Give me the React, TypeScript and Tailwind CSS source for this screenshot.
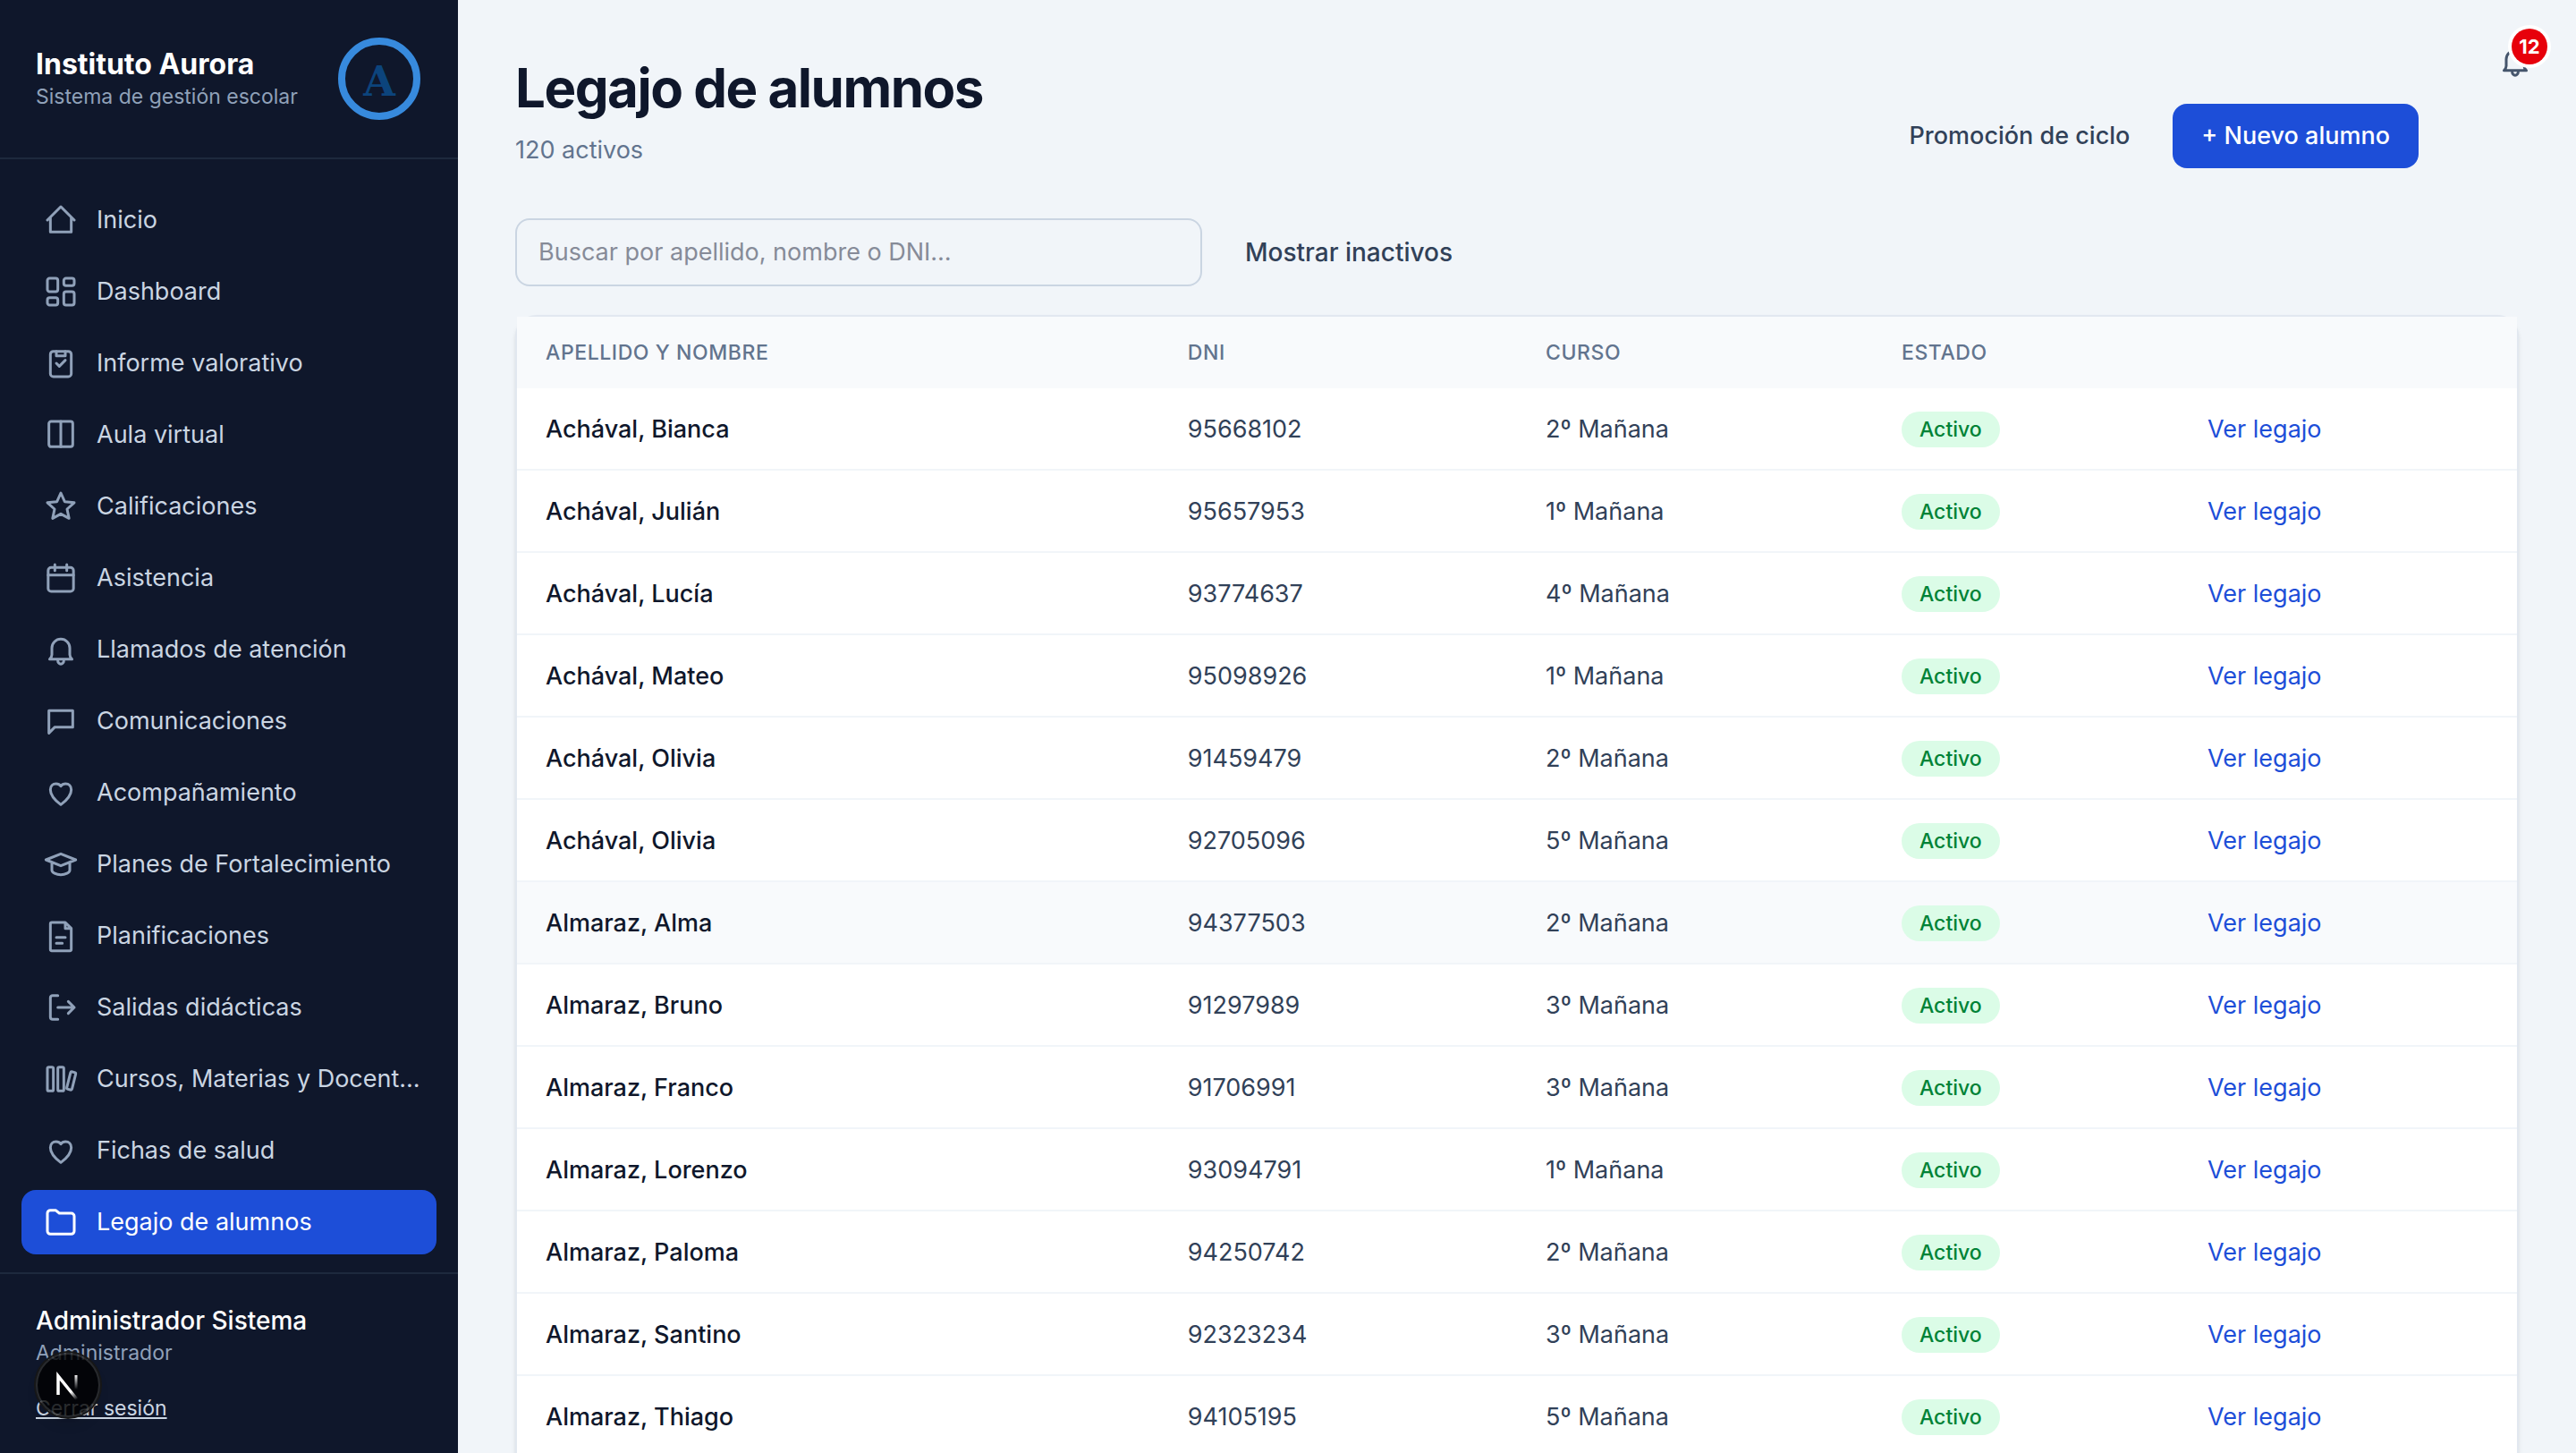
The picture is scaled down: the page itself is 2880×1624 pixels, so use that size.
import type { ReactNode } from 'react';

interface NavItem {
  label: string;
  icon: ReactNode;
  active?: boolean;
}

interface Alumno {
  nombre: string;
  dni: string;
  curso: string;
  resaltado?: boolean;
}

const heart = <path d="M12 20C8 17 5 13.700 5 10C5 7.500 6.600 6 8.800 6C10.200 6 11.300 6.600 12 7.600C12.700 6.600 13.800 6 15.200 6C17.400 6 19 7.500 19 10C19 13.700 16 17 12 20Z" />;

const bell = (
  <>
    <path d="M6 11a6 6 0 0 1 12 0v4.500c0 1.200.5 2 1.500 3h-15c1-1 1.500-1.800 1.500-3V11z" />
    <path d="M10 19.500a2 2.200 0 0 0 4 0" />
  </>
);

const NAV: NavItem[] = [
  { label: 'Inicio', icon: <path d="M3 12l9-9 9 9M5 10v10h14V10" /> },
  {
    label: 'Dashboard',
    icon: (
      <>
        <rect x="3" y="3" width="7" height="9" rx="1.500" />
        <rect x="14" y="3" width="7" height="5" rx="1.500" />
        <rect x="14" y="12" width="7" height="9" rx="1.500" />
        <rect x="3" y="16" width="7" height="5" rx="1.500" />
      </>
    ),
  },
  {
    label: 'Informe valorativo',
    icon: (
      <>
        <rect x="5" y="4" width="14" height="17" rx="2" />
        <path d="M9 4v3h6V4M9 12l2 2 4-4" />
      </>
    ),
  },
  {
    label: 'Aula virtual',
    icon: (
      <>
        <rect x="4" y="3" width="16" height="17" rx="1.500" />
        <path d="M12 3v17" />
      </>
    ),
  },
  { label: 'Calificaciones', icon: <path d="m12 3 2.600 5.800 6.400.7-4.800 4.300 1.300 6.200L12 17l-5.500 3 1.300-6.200L3 9.500l6.400-.7L12 3z" /> },
  {
    label: 'Asistencia',
    icon: (
      <>
        <rect x="3.500" y="5" width="17" height="16" rx="2" />
        <path d="M3.500 10h17M8 3v4M16 3v4" />
      </>
    ),
  },
  { label: 'Llamados de atención', icon: bell },
  { label: 'Comunicaciones', icon: <path d="M4 5h16v11H8l-4 4V5z" /> },
  { label: 'Acompañamiento', icon: heart },
  { label: 'Planes de Fortalecimiento', icon: <path d="M12 5 2 9l10 4 10-4L12 5zM6 10.500V16c0 1.500 3 3 6 3s6-1.500 6-3v-5.500" /> },
  { label: 'Planificaciones', icon: <path d="M6 3h9l4 4v14a1 1 0 0 1-1 1H6a1 1 0 0 1-1-1V4a1 1 0 0 1 1-1zM15 3v4h4M9 13h6M9 17h4" /> },
  { label: 'Salidas didácticas', icon: <path d="M10 4H6.500A1.500 1.500 0 0 0 5 5.500v13A1.500 1.500 0 0 0 6.500 20H10M10 12h11M17 8l4 4-4 4" /> },
  {
    label: 'Cursos, Materias y Docent…',
    icon: (
      <>
        <rect x="3" y="4" width="4" height="16" rx="1" />
        <rect x="10" y="4" width="4" height="16" rx="1" />
        <rect x="17.200" y="7.200" width="3.600" height="12" rx="1" transform="rotate(14 19 13.200)" />
      </>
    ),
  },
  { label: 'Fichas de salud', icon: heart },
  {
    label: 'Legajo de alumnos',
    icon: <path d="M3 6a2 2 0 0 1 2-2h3.500L11 6h8a2 2 0 0 1 2 2v10a2 2 0 0 1-2 2H5a2 2 0 0 1-2-2V6z" />,
    active: true,
  },
];

const ALUMNOS: Alumno[] = [
  { nombre: 'Achával, Bianca', dni: '95668102', curso: '2º Mañana' },
  { nombre: 'Achával, Julián', dni: '95657953', curso: '1º Mañana' },
  { nombre: 'Achával, Lucía', dni: '93774637', curso: '4º Mañana' },
  { nombre: 'Achával, Mateo', dni: '95098926', curso: '1º Mañana' },
  { nombre: 'Achával, Olivia', dni: '91459479', curso: '2º Mañana' },
  { nombre: 'Achával, Olivia', dni: '92705096', curso: '5º Mañana' },
  { nombre: 'Almaraz, Alma', dni: '94377503', curso: '2º Mañana', resaltado: true },
  { nombre: 'Almaraz, Bruno', dni: '91297989', curso: '3º Mañana' },
  { nombre: 'Almaraz, Franco', dni: '91706991', curso: '3º Mañana' },
  { nombre: 'Almaraz, Lorenzo', dni: '93094791', curso: '1º Mañana' },
  { nombre: 'Almaraz, Paloma', dni: '94250742', curso: '2º Mañana' },
  { nombre: 'Almaraz, Santino', dni: '92323234', curso: '3º Mañana' },
  { nombre: 'Almaraz, Thiago', dni: '94105195', curso: '5º Mañana' },
];

function Icon({ children, className }: { children: ReactNode; className: string }) {
  return (
    <svg
      viewBox="0 0 24 24"
      fill="none"
      stroke="currentColor"
      strokeWidth="1.800"
      strokeLinecap="round"
      strokeLinejoin="round"
      aria-hidden="true"
      className={className}
    >
      {children}
    </svg>
  );
}

function Sidebar() {
  return (
    <aside className="relative flex w-[512px] shrink-0 flex-col bg-slate-900">
      <div className="flex items-center justify-between border-b-2 border-slate-800 p-10">
        <div>
          <p className="text-[32px] leading-10 font-bold text-white">Instituto Aurora</p>
          <p className="text-[23px] leading-8 text-slate-400">Sistema de gestión escolar</p>
        </div>
        <svg viewBox="0 0 96 96" className="size-24 shrink-0" aria-label="Instituto Aurora">
          <circle cx="48" cy="48" r="42" fill="none" stroke="#378add" strokeWidth="8" />
          <text x="48" y="67" textAnchor="middle" fontFamily="DejaVu Serif, serif" fontWeight="700" fontSize="46" fill="#0c447c">
            A
          </text>
        </svg>
      </div>

      <nav className="flex flex-1 flex-col gap-2 overflow-hidden px-6 pt-8">
        {NAV.map((item) => (
          <a
            key={item.label}
            href="#"
            className={`flex shrink-0 items-center gap-5 rounded-2xl px-6 py-4 text-[27px] leading-10 ${
              item.active ? 'bg-[#1d4ed8] text-white' : 'text-slate-300'
            }`}
          >
            <Icon className={`size-10 shrink-0 ${item.active ? 'text-white' : 'text-slate-400'}`}>{item.icon}</Icon>
            <span className="whitespace-nowrap">{item.label}</span>
          </a>
        ))}
      </nav>

      <div className="border-t-2 border-slate-800 px-10 py-8">
        <p className="text-[28px] leading-10 font-medium text-white">Administrador Sistema</p>
        <p className="text-[23px] leading-8 text-slate-400">Administrador</p>
        <button className="mt-7 block text-[23px] leading-9 text-slate-300 underline">Cerrar sesión</button>
      </div>

      {/* Dev tools button */}
      <button
        aria-label="Next.js"
        className="absolute bottom-10 left-10 flex size-[72px] items-center justify-center rounded-full border-2 border-white/15 bg-black/80 shadow-lg ring-2 ring-[#171717]"
      >
        <svg viewBox="0 0 40 40" className="size-10" fill="none" aria-hidden="true">
          <defs>
            <linearGradient id="diag" x1="24" y1="27" x2="30" y2="36" gradientUnits="userSpaceOnUse">
              <stop stopColor="white" />
              <stop offset="1" stopColor="white" stopOpacity="0" />
            </linearGradient>
            <linearGradient id="stem" x1="29" y1="8" x2="29" y2="25" gradientUnits="userSpaceOnUse">
              <stop stopColor="white" />
              <stop offset="1" stopColor="white" stopOpacity="0" />
            </linearGradient>
          </defs>
          <path d="M9 31V10l21 26" stroke="url(#diag)" strokeWidth="3.500" />
          <path d="M29 9v17" stroke="url(#stem)" strokeWidth="3" />
        </svg>
      </button>
    </aside>
  );
}

export default function App() {
  return (
    <div className="flex h-screen bg-slate-100 font-['Inter','Noto_Sans',sans-serif]">
      <Sidebar />

      <main className="relative flex-1 overflow-y-auto p-16 [scrollbar-width:none]">
        <header className="flex items-end justify-between pr-28">
          <div>
            <h1 className="text-6xl leading-[68px] font-bold tracking-tight text-slate-900">Legajo de alumnos</h1>
            <p className="mt-4 text-[27px] leading-10 text-slate-500">120 activos</p>
          </div>
          <div className="flex gap-4">
            <button className="rounded-2xl px-8 py-4 text-[27px] leading-10 font-medium text-slate-700">Promoción de ciclo</button>
            <button className="rounded-2xl bg-[#1d4ed8] px-8 py-4 text-[27px] leading-10 font-medium text-white">+ Nuevo alumno</button>
          </div>
        </header>

        <button aria-label="Notificaciones" className="absolute top-7 right-7 flex size-20 items-center justify-center text-slate-600">
          <Icon className="size-10">{bell}</Icon>
          <span className="absolute top-1 right-1 flex h-10 min-w-10 items-center justify-center rounded-full bg-red-600 px-2 text-[22px] font-bold text-white ring-4 ring-white">
            12
          </span>
        </button>

        <div className="mt-14 flex items-center gap-4">
          <input
            type="search"
            aria-label="Buscar alumno"
            placeholder="Buscar por apellido, nombre o DNI…"
            className="w-full max-w-[768px] rounded-2xl border-2 border-slate-300 bg-transparent px-6 py-4 text-[27px] leading-10 text-slate-900 placeholder:text-[#868b98]"
          />
          <button className="rounded-2xl px-8 py-4 text-[28px] leading-10 font-medium text-slate-700">Mostrar inactivos</button>
        </div>

        <div className="mt-8 rounded-3xl border-2 border-slate-200 bg-white pb-8 shadow-md">
          <table className="w-full table-fixed border-separate border-spacing-0 text-left text-[27px] leading-10">
            <colgroup>
              <col className="w-[32.1%]" />
              <col className="w-[17.9%]" />
              <col className="w-[17.8%]" />
              <col className="w-[15.3%]" />
              <col />
            </colgroup>
            <thead className="bg-slate-50">
              <tr className="h-20 text-[23px] tracking-wide text-slate-500 uppercase">
                <th className="px-8 font-medium">Apellido y nombre</th>
                <th className="px-8 font-medium">DNI</th>
                <th className="px-8 font-medium">Curso</th>
                <th className="px-8 font-medium">Estado</th>
                <th className="px-8 font-medium" aria-label="Acciones" />
              </tr>
            </thead>
            <tbody>
              {ALUMNOS.map((alumno) => (
                <tr
                  key={alumno.dni}
                  className={`h-[92px] *:border-b-2 *:border-slate-100 *:px-8 *:pt-[2px] ${alumno.resaltado ? 'bg-slate-50' : ''}`}
                >
                  <td className="font-medium text-slate-900">{alumno.nombre}</td>
                  <td className="text-slate-700">{alumno.dni}</td>
                  <td className="text-slate-700">{alumno.curso}</td>
                  <td>
                    <span className="flex h-10 w-fit items-center rounded-full bg-green-100 px-5 text-[23px] font-medium text-green-700">
                      Activo
                    </span>
                  </td>
                  <td>
                    <a href="#" className="text-[#1d4ed8]">Ver legajo</a>
                  </td>
                </tr>
              ))}
            </tbody>
          </table>
        </div>
      </main>
    </div>
  );
}
